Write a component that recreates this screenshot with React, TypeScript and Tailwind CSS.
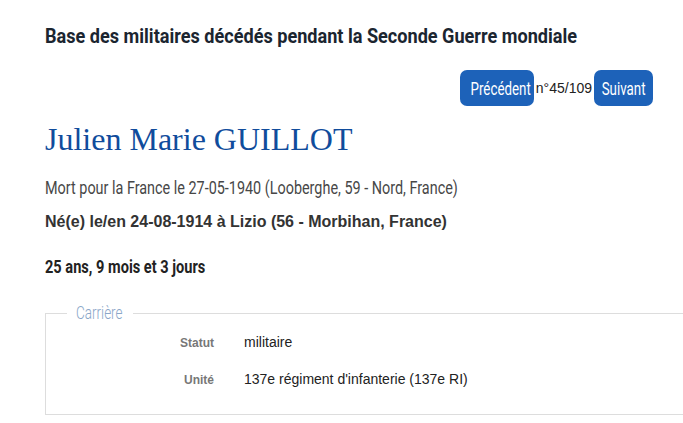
import React from 'react';

const App = () => {
  const rows = [
    { label: 'Statut', value: 'militaire' },
    { label: 'Unité', value: '137e régiment d\'infanterie (137e RI)' },
  ];

  return (
    <div className="w-[683px] h-[423px] overflow-hidden bg-white font-['Liberation_Sans',Arial,sans-serif]">
      <div className="pl-[45px] pr-[30px] pt-[22px]">
        <h1 className="text-[21px] leading-[28px] font-bold text-[#1b2530] font-['Roboto',sans-serif]">
          <span className="inline-block whitespace-nowrap origin-left scale-x-[0.862]">
            Base des militaires décédés pendant la Seconde Guerre mondiale
          </span>
        </h1>

        {/* Navigation */}
        <div className="flex justify-end items-center mt-[20px] gap-[2px]">
          <button className="h-[36px] w-[74px] rounded-[7px] bg-[#1d62b9] text-white text-[18px] font-['Roboto',sans-serif]">
            <span className="inline-block whitespace-nowrap scale-x-[0.74]">Précédent</span>
          </button>
          <span className="text-[14px] text-[#222]">n°45/109</span>
          <button className="h-[36px] w-[59px] rounded-[7px] bg-[#1d62b9] text-white text-[18px] font-['Roboto',sans-serif]">
            <span className="inline-block whitespace-nowrap scale-x-[0.74]">Suivant</span>
          </button>
        </div>

        <h2 className="mt-[13px] text-[32px] leading-[40px] text-[#104c9c] font-['Liberation_Serif',Georgia,serif]">
          Julien Marie GUILLOT
        </h2>
        <p className="mt-[17px] text-[18px] leading-[24px] text-[#474747] font-['Roboto',sans-serif]">
          <span className="inline-block whitespace-nowrap origin-left scale-x-[0.8]">
            Mort pour la France le 27-05-1940 (Looberghe, 59 - Nord, France)
          </span>
        </p>
        <p className="mt-[12px] text-[16px] leading-[20px] font-bold text-[#333]">
          Né(e) le/en 24-08-1914 à Lizio (56 - Morbihan, France)
        </p>
        <p className="mt-[22px] text-[18px] leading-[26px] font-bold text-[#222] font-['Roboto',sans-serif]">
          <span className="inline-block whitespace-nowrap origin-left scale-x-[0.81]">25 ans, 9 mois et 3 jours</span>
        </p>

        {/* Carrière */}
        <fieldset className="mt-[23px] -mr-[60px] border border-[#ddd] pb-[24px]">
          <legend className="ml-[21px] px-[9px] text-[18px] leading-[20px] text-[#8aa6c8] font-light font-['Roboto',sans-serif]">
            <span className="inline-block w-[48px] whitespace-nowrap origin-left scale-x-[0.75]">Carrière</span>
          </legend>
          <div className="mt-[9px] flex flex-col gap-[16px]">
            {rows.map((row) => (
              <div key={row.label} className="flex items-baseline">
                <span className="w-[168px] text-right text-[12px] font-bold text-[#777]">{row.label}</span>
                <span className="ml-[30px] text-[14px] text-[#222]">{row.value}</span>
              </div>
            ))}
          </div>
        </fieldset>
      </div>
    </div>
  );
};

export default App;
